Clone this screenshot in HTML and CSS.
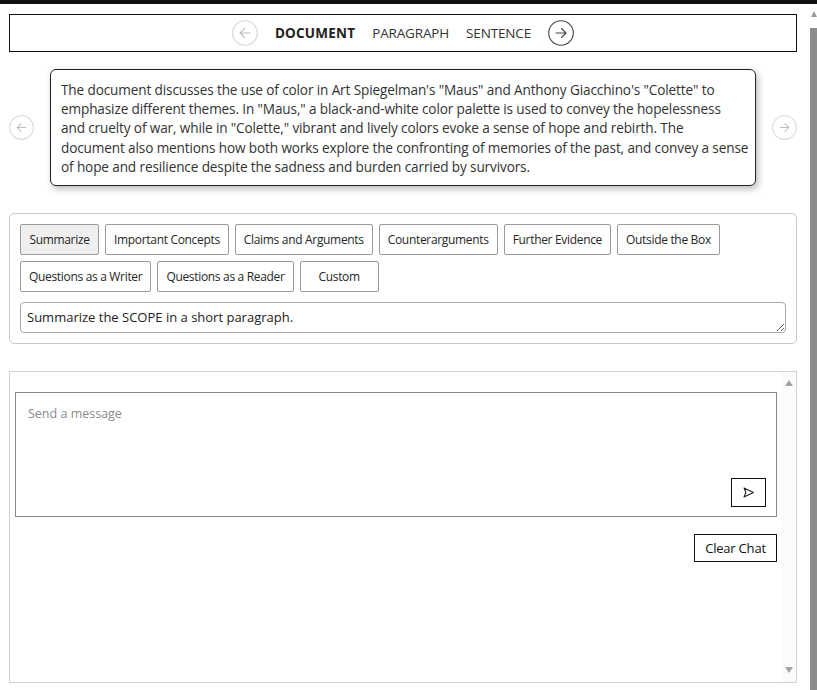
FILE: index.html
```html
<!DOCTYPE html>
<html lang="en">
<head>
<meta charset="utf-8">
<title>Scope Reader</title>
<link rel="stylesheet" href="styles.css">
</head>
<body>
<div class="topbar"></div>
<div class="frame">
  <main class="page">
    <nav class="scope-nav">
      <button class="circle-btn disabled" aria-label="Previous scope">
        <svg viewBox="0 0 26 26" width="26" height="26"><circle cx="13" cy="13" r="12.3"/><path d="M18 13H8M12.5 8.5L8 13l4.5 4.5"/></svg>
      </button>
      <span class="scope active">DOCUMENT</span>
      <span class="scope">PARAGRAPH</span>
      <span class="scope">SENTENCE</span>
      <button class="circle-btn" aria-label="Next scope">
        <svg viewBox="0 0 26 26" width="26" height="26"><circle cx="13" cy="13" r="12.3"/><path d="M8 13h10M13.5 8.5L18 13l-4.5 4.5"/></svg>
      </button>
    </nav>

    <section class="summary-row">
      <button class="circle-btn small disabled" aria-label="Previous">
        <svg viewBox="0 0 26 26" width="25" height="25"><circle cx="13" cy="13" r="12.3"/><path d="M17.5 13h-9M12.5 9L8.5 13l4 4"/></svg>
      </button>
      <div class="summary-card">
        The document discusses the use of color in Art Spiegelman's "Maus" and Anthony Giacchino's "Colette" to<br>
        emphasize different themes. In "Maus," a black-and-white color palette is used to convey the hopelessness<br>
        and cruelty of war, while in "Colette," vibrant and lively colors evoke a sense of hope and rebirth. The<br>
        document also mentions how both works explore the confronting of memories of the past, and convey a sense<br>
        of hope and resilience despite the sadness and burden carried by survivors.
      </div>
      <button class="circle-btn small disabled" aria-label="Next">
        <svg viewBox="0 0 26 26" width="25" height="25"><circle cx="13" cy="13" r="12.3"/><path d="M8.5 13h9M13.5 9l4 4-4 4"/></svg>
      </button>
    </section>

    <section class="prompt-panel">
      <div class="chips">
        <button class="chip selected">Summarize</button>
        <button class="chip">Important Concepts</button>
        <button class="chip">Claims and Arguments</button>
        <button class="chip">Counterarguments</button>
        <button class="chip">Further Evidence</button>
        <button class="chip">Outside the Box</button>
        <button class="chip">Questions as a Writer</button>
        <button class="chip">Questions as a Reader</button>
        <button class="chip">Custom</button>
      </div>
      <textarea class="prompt-input">Summarize the SCOPE in a short paragraph.</textarea>
    </section>

    <section class="chat">
      <div class="chat-body">
        <div class="composer">
          <textarea class="message-input" placeholder="Send a message"></textarea>
          <button class="send-btn" aria-label="Send">
            <svg viewBox="0 0 16 16" width="13" height="13"><path d="M2.5 2.5L14 8 2.5 13.5 4.8 8z"/></svg>
          </button>
        </div>
        <div class="chat-actions">
          <button class="clear-btn">Clear Chat</button>
        </div>
      </div>
      <div class="chat-scrollbar">
        <span class="tri up"></span>
        <span class="tri down"></span>
      </div>
    </section>
  </main>
  <div class="page-scrollbar">
    <span class="sb-arrow"></span>
    <span class="sb-thumb"></span>
  </div>
</div>
</body>
</html>
```

FILE: styles.css
```css
* { box-sizing: border-box; }

html, body {
  margin: 0;
  padding: 0;
  background: #fff;
  font-family: "Open Sans", "Noto Sans", sans-serif;
  color: #222;
  overflow: hidden;
}

.topbar {
  height: 4px;
  background: #111;
}

.frame {
  display: flex;
  height: 686px;
}

.page {
  flex: 1;
  padding: 10px 13px 0 9px;
  min-width: 0;
}

/* Scope navigation */
.scope-nav {
  height: 38px;
  border: 1px solid #111;
  display: flex;
  align-items: center;
  justify-content: center;
  gap: 17px;
}

.scope {
  font-size: 13.5px;
  color: #333;
  letter-spacing: -0.15px;
}

.scope.active {
  font-weight: 700;
  color: #222;
  letter-spacing: 0.2px;
}

.circle-btn {
  border: 0;
  background: none;
  padding: 0;
  margin: 0;
  display: flex;
  cursor: pointer;
}

.circle-btn svg {
  fill: none;
  stroke: #444;
  stroke-width: 1.1;
  stroke-linecap: round;
  stroke-linejoin: round;
}

.circle-btn.disabled svg {
  stroke: #d6d6d6;
}

.circle-btn.disabled svg path {
  stroke: #bdbdbd;
}

/* Summary */
.summary-row {
  margin-top: 17px;
  display: flex;
  align-items: center;
  justify-content: space-between;
}

.summary-card {
  width: 706px;
  border: 1px solid #222;
  border-radius: 6px;
  padding: 10px 10px 9px 10px;
  font-size: 13.6px;
  line-height: 19.2px;
  letter-spacing: -0.13px;
  color: #333;
  box-shadow: 2px 3px 7px rgba(0, 0, 0, 0.28);
  white-space: nowrap;
}

/* Prompt panel */
.prompt-panel {
  margin-top: 27px;
  border: 1px solid #c9c9c9;
  border-radius: 5px;
  padding: 10px;
}

.chips {
  display: flex;
  flex-wrap: wrap;
  gap: 6px;
}

.chip {
  height: 31px;
  min-width: 79px;
  padding: 0 8px;
  border: 1px solid #9a9a9a;
  border-radius: 2px;
  background: #fff;
  font-family: "Open Sans", "Noto Sans", sans-serif;
  font-size: 12px;
  letter-spacing: -0.32px;
  color: #262626;
}

.chip.selected {
  background: #efefef;
}

.prompt-input {
  display: block;
  margin-top: 10px;
  width: 100%;
  height: 31px;
  border: 1px solid #a9a9a9;
  border-radius: 4px;
  padding: 5px 6px;
  font-family: "Open Sans", "Noto Sans", sans-serif;
  font-size: 13px;
  line-height: 19px;
  color: #222;
  resize: vertical;
  overflow: hidden;
}

/* Chat */
.chat {
  margin-top: 27px;
  height: 312px;
  border: 1px solid #d2d2d2;
  display: flex;
}

.chat-body {
  flex: 1;
  padding: 20px 4px 0 5px;
}

.composer {
  position: relative;
  height: 125px;
}

.message-input {
  display: block;
  width: 100%;
  height: 100%;
  border: 1px solid #8a8a8a;
  padding: 12px 12px;
  font-family: "Open Sans", "Noto Sans", sans-serif;
  font-size: 12.5px;
  color: #333;
  resize: none;
  outline: none;
}

.message-input::placeholder {
  color: #8a8a8a;
}

.send-btn {
  position: absolute;
  right: 11px;
  bottom: 10px;
  width: 35px;
  height: 29px;
  border: 1px solid #111;
  background: #fff;
  display: flex;
  align-items: center;
  justify-content: center;
  padding: 0;
}

.send-btn svg {
  fill: none;
  stroke: #222;
  stroke-width: 1.3;
  stroke-linejoin: round;
}

.chat-actions {
  display: flex;
  justify-content: flex-end;
  margin-top: 17px;
}

.clear-btn {
  height: 28px;
  width: 83px;
  border: 1px solid #111;
  background: #fff;
  font-family: "Open Sans", "Noto Sans", sans-serif;
  font-size: 13px;
  color: #111;
  padding: 0;
  letter-spacing: -0.2px;
}

.chat-scrollbar {
  width: 15px;
  background: #fbfbfb;
  display: flex;
  flex-direction: column;
  justify-content: space-between;
  align-items: center;
  padding: 8px 0 9px;
}

.tri {
  width: 0;
  height: 0;
  border-left: 4px solid transparent;
  border-right: 4px solid transparent;
}

.tri.up { border-bottom: 6px solid #a3a3a3; }
.tri.down { border-top: 6px solid #a3a3a3; }

/* Page scrollbar */
.page-scrollbar {
  width: 7px;
  display: flex;
  flex-direction: column;
  align-items: flex-end;
}

.sb-arrow {
  margin-top: 7px;
  width: 0;
  height: 0;
  border-left: 3px solid transparent;
  border-right: 3px solid transparent;
  border-bottom: 6px solid #9a9a9a;
}

.sb-thumb {
  margin-top: 11px;
  flex: 1;
  width: 7px;
  background: #8c8c8c;
}
```
